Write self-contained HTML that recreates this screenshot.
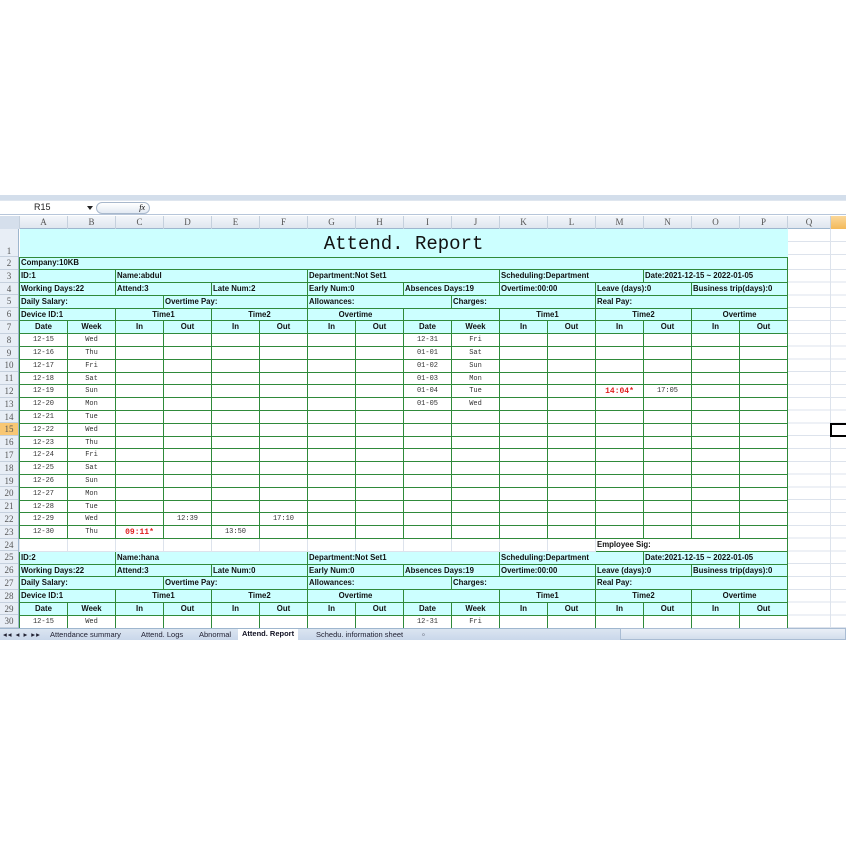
<!DOCTYPE html>
<html><head><meta charset="utf-8"><style>
*{margin:0;padding:0;box-sizing:border-box}
body{width:846px;height:846px;background:#fff;position:relative;overflow:hidden;font-family:"Liberation Sans",sans-serif}
.strip{position:absolute;left:0;top:195px;width:846px;height:5px;background:#d3deeb}
.fbar{position:absolute;left:0;top:200px;width:846px;height:15px;background:#fff;border-bottom:1px solid #b7c6da;border-top:1px solid #dfe6ef}
.nb{position:absolute;left:0;top:0;width:95px;height:14px;font-size:9px;line-height:13px;padding-left:34px;color:#222}
.arr{position:absolute;left:87px;top:5px;border:3px solid transparent;border-top:4px solid #222}
.fx{position:absolute;left:96px;top:1px;width:54px;height:12px;border:1px solid #a8b8cc;border-radius:6px;background:linear-gradient(#fff,#e3eaf3);font:italic 8px "Liberation Serif",serif;text-align:right;padding-right:4px;line-height:10px}
.colh{position:absolute;top:216px;left:0;width:846px;height:13px;background:linear-gradient(#f3f6fa,#dfe6ef);border-bottom:1px solid #9eb6ce}
.colh div{position:absolute;top:0;height:13px;border-left:1px solid #c5d0dd;font:9px "Liberation Serif",serif;color:#555;text-align:center;line-height:13px}
.rown{position:absolute;left:0;top:229px;width:19px;background:#e8eef6;border-right:1px solid #9eb6ce}
.rown div{font:9px "Liberation Serif",serif;color:#555;text-align:center;border-bottom:1px solid #c5d0dd;height:12.8px;line-height:12px}
.grid{position:absolute;left:787px;top:229px;width:59px;height:399px;background:repeating-linear-gradient(to bottom,transparent 0,transparent 11.8px,#dde3ec 11.8px,#dde3ec 12.8px);background-position:0 28px}
.grid:before{content:"";position:absolute;left:43px;top:0;width:1px;height:399px;background:#dde3ec}
table{position:absolute;left:19px;top:229px;border-collapse:collapse;table-layout:fixed;width:768px}
td{border:1px solid #2f8a3a;height:12.8px;font-size:7.8px;white-space:nowrap;overflow:hidden;padding:0 1px;line-height:10px;color:#111}
tr.t td{height:28px;border:none;border-bottom:1px solid #2f8a3a;background:#ccffff;text-align:center;font:19px "Liberation Mono",monospace;padding-top:3px}
tr.h td{background:#ccffff;font-weight:bold}
tr.h2 td{background:#ccffff;font-weight:bold;text-align:center}
tr.d td{font:7px "Liberation Mono",monospace;text-align:center;color:#333}
td.r{color:#e02020!important;font-weight:bold!important;font-size:8px!important}
tr.e td{border-color:#dde3ec;border-top-color:#2f8a3a}
tr.e td.sg{border:1px solid #2f8a3a;font:bold 7.8px "Liberation Sans",sans-serif;text-align:left;background:#fff}
.c{text-align:center}
.tabs{position:absolute;left:0;top:628px;width:846px;height:12px;background:linear-gradient(#dbe5f1,#c9d7ea);border-top:1px solid #9eb6ce;font-size:7.5px;color:#223}
.tabs span{position:absolute;top:1px}
.sb{position:absolute;left:620px;top:628px;width:226px;height:12px;background:linear-gradient(#e9eff7,#d3deec);border:1px solid #a9bcd3}
.sel{position:absolute;left:830px;top:423px;width:20px;height:14px;border:2px solid #000}
</style></head><body>
<div class="strip"></div>
<div class="fbar"><div class="nb">R15</div><div class="arr"></div><div class="fx">fx</div></div>
<div class="colh">
<div style="left:0;width:19px;border:none;background:#d5dfec"></div>
<div style="left:19px;width:48px">A</div><div style="left:67px;width:48px">B</div><div style="left:115px;width:48px">C</div><div style="left:163px;width:48px">D</div><div style="left:211px;width:48px">E</div><div style="left:259px;width:48px">F</div><div style="left:307px;width:48px">G</div><div style="left:355px;width:48px">H</div><div style="left:403px;width:48px">I</div><div style="left:451px;width:48px">J</div><div style="left:499px;width:48px">K</div><div style="left:547px;width:48px">L</div><div style="left:595px;width:48px">M</div><div style="left:643px;width:48px">N</div><div style="left:691px;width:48px">O</div><div style="left:739px;width:48px">P</div><div style="left:787px;width:43px">Q</div><div style="left:830px;width:16px;background:linear-gradient(#fbd89a,#f3b95a)"></div>
</div>
<div class="rown">
<div style="height:28px;line-height:44px">1</div><div>2</div><div>3</div><div>4</div><div>5</div><div>6</div><div>7</div><div>8</div><div>9</div><div>10</div><div>11</div><div>12</div><div>13</div><div>14</div><div style="background:#f8c774">15</div><div>16</div><div>17</div><div>18</div><div>19</div><div>20</div><div>21</div><div>22</div><div>23</div><div>24</div><div>25</div><div>26</div><div>27</div><div>28</div><div>29</div><div>30</div>
</div>
<div class="grid"></div>
<table>
<colgroup><col span="16" style="width:48px"></colgroup>
<tr class="t"><td colspan="16">Attend. Report</td></tr>
<tr class="h"><td colspan="16">Company:10KB</td></tr>
<tr class="h"><td colspan="2">ID:1</td><td colspan="4">Name:abdul</td><td colspan="4">Department:Not Set1</td><td colspan="3">Scheduling:Department</td><td colspan="3">Date:2021-12-15 ~ 2022-01-05</td></tr>
<tr class="h"><td colspan="2">Working Days:22</td><td colspan="2">Attend:3</td><td colspan="2">Late Num:2</td><td colspan="2">Early Num:0</td><td colspan="2">Absences Days:19</td><td colspan="2">Overtime:00:00</td><td colspan="2">Leave (days):0</td><td colspan="2">Business trip(days):0</td></tr>
<tr class="h"><td colspan="3">Daily Salary:</td><td colspan="3">Overtime Pay:</td><td colspan="3">Allowances:</td><td colspan="3">Charges:</td><td colspan="4">Real Pay:</td></tr>
<tr class="h"><td colspan="2">Device ID:1</td><td colspan="2" class="c">Time1</td><td colspan="2" class="c">Time2</td><td colspan="2" class="c">Overtime</td><td colspan="2"></td><td colspan="2" class="c">Time1</td><td colspan="2" class="c">Time2</td><td colspan="2" class="c">Overtime</td></tr>
<tr class="h2"><td>Date</td><td>Week</td><td>In</td><td>Out</td><td>In</td><td>Out</td><td>In</td><td>Out</td><td>Date</td><td>Week</td><td>In</td><td>Out</td><td>In</td><td>Out</td><td>In</td><td>Out</td></tr>
<tr class="d"><td>12-15</td><td>Wed</td><td></td><td></td><td></td><td></td><td></td><td></td><td>12-31</td><td>Fri</td><td></td><td></td><td></td><td></td><td></td><td></td></tr>
<tr class="d"><td>12-16</td><td>Thu</td><td></td><td></td><td></td><td></td><td></td><td></td><td>01-01</td><td>Sat</td><td></td><td></td><td></td><td></td><td></td><td></td></tr>
<tr class="d"><td>12-17</td><td>Fri</td><td></td><td></td><td></td><td></td><td></td><td></td><td>01-02</td><td>Sun</td><td></td><td></td><td></td><td></td><td></td><td></td></tr>
<tr class="d"><td>12-18</td><td>Sat</td><td></td><td></td><td></td><td></td><td></td><td></td><td>01-03</td><td>Mon</td><td></td><td></td><td></td><td></td><td></td><td></td></tr>
<tr class="d"><td>12-19</td><td>Sun</td><td></td><td></td><td></td><td></td><td></td><td></td><td>01-04</td><td>Tue</td><td></td><td></td><td class="r">14:04*</td><td>17:05</td><td></td><td></td></tr>
<tr class="d"><td>12-20</td><td>Mon</td><td></td><td></td><td></td><td></td><td></td><td></td><td>01-05</td><td>Wed</td><td></td><td></td><td></td><td></td><td></td><td></td></tr>
<tr class="d"><td>12-21</td><td>Tue</td><td></td><td></td><td></td><td></td><td></td><td></td><td></td><td></td><td></td><td></td><td></td><td></td><td></td><td></td></tr>
<tr class="d"><td>12-22</td><td>Wed</td><td></td><td></td><td></td><td></td><td></td><td></td><td></td><td></td><td></td><td></td><td></td><td></td><td></td><td></td></tr>
<tr class="d"><td>12-23</td><td>Thu</td><td></td><td></td><td></td><td></td><td></td><td></td><td></td><td></td><td></td><td></td><td></td><td></td><td></td><td></td></tr>
<tr class="d"><td>12-24</td><td>Fri</td><td></td><td></td><td></td><td></td><td></td><td></td><td></td><td></td><td></td><td></td><td></td><td></td><td></td><td></td></tr>
<tr class="d"><td>12-25</td><td>Sat</td><td></td><td></td><td></td><td></td><td></td><td></td><td></td><td></td><td></td><td></td><td></td><td></td><td></td><td></td></tr>
<tr class="d"><td>12-26</td><td>Sun</td><td></td><td></td><td></td><td></td><td></td><td></td><td></td><td></td><td></td><td></td><td></td><td></td><td></td><td></td></tr>
<tr class="d"><td>12-27</td><td>Mon</td><td></td><td></td><td></td><td></td><td></td><td></td><td></td><td></td><td></td><td></td><td></td><td></td><td></td><td></td></tr>
<tr class="d"><td>12-28</td><td>Tue</td><td></td><td></td><td></td><td></td><td></td><td></td><td></td><td></td><td></td><td></td><td></td><td></td><td></td><td></td></tr>
<tr class="d"><td>12-29</td><td>Wed</td><td></td><td>12:39</td><td></td><td>17:10</td><td></td><td></td><td></td><td></td><td></td><td></td><td></td><td></td><td></td><td></td></tr>
<tr class="d"><td>12-30</td><td>Thu</td><td class="r">09:11*</td><td></td><td>13:50</td><td></td><td></td><td></td><td></td><td></td><td></td><td></td><td></td><td></td><td></td><td></td></tr>
<tr class="e"><td></td><td></td><td></td><td></td><td></td><td></td><td></td><td></td><td></td><td></td><td></td><td></td><td colspan="4" class="sg">Employee Sig:</td></tr>
<tr class="h"><td colspan="2">ID:2</td><td colspan="4">Name:hana</td><td colspan="4">Department:Not Set1</td><td colspan="3">Scheduling:Department</td><td colspan="3">Date:2021-12-15 ~ 2022-01-05</td></tr>
<tr class="h"><td colspan="2">Working Days:22</td><td colspan="2">Attend:3</td><td colspan="2">Late Num:0</td><td colspan="2">Early Num:0</td><td colspan="2">Absences Days:19</td><td colspan="2">Overtime:00:00</td><td colspan="2">Leave (days):0</td><td colspan="2">Business trip(days):0</td></tr>
<tr class="h"><td colspan="3">Daily Salary:</td><td colspan="3">Overtime Pay:</td><td colspan="3">Allowances:</td><td colspan="3">Charges:</td><td colspan="4">Real Pay:</td></tr>
<tr class="h"><td colspan="2">Device ID:1</td><td colspan="2" class="c">Time1</td><td colspan="2" class="c">Time2</td><td colspan="2" class="c">Overtime</td><td colspan="2"></td><td colspan="2" class="c">Time1</td><td colspan="2" class="c">Time2</td><td colspan="2" class="c">Overtime</td></tr>
<tr class="h2"><td>Date</td><td>Week</td><td>In</td><td>Out</td><td>In</td><td>Out</td><td>In</td><td>Out</td><td>Date</td><td>Week</td><td>In</td><td>Out</td><td>In</td><td>Out</td><td>In</td><td>Out</td></tr>
<tr class="d"><td>12-15</td><td>Wed</td><td></td><td></td><td></td><td></td><td></td><td></td><td>12-31</td><td>Fri</td><td></td><td></td><td></td><td></td><td></td><td></td></tr>
</table>
<div class="sel"></div>
<div class="tabs">
<span style="left:3px;letter-spacing:1px">◂◂ ◂ ▸ ▸▸</span>
<span style="left:50px">Attendance summary</span>
<span style="left:141px">Attend. Logs</span>
<span style="left:199px">Abnormal</span>
<span style="left:238px;top:0;height:11px;background:#fff;padding:0 4px;font-weight:bold;color:#112">Attend. Report</span>
<span style="left:316px">Schedu. information sheet</span>
<span style="left:422px">▫</span>
</div>
<div class="sb"></div>
</body></html>
